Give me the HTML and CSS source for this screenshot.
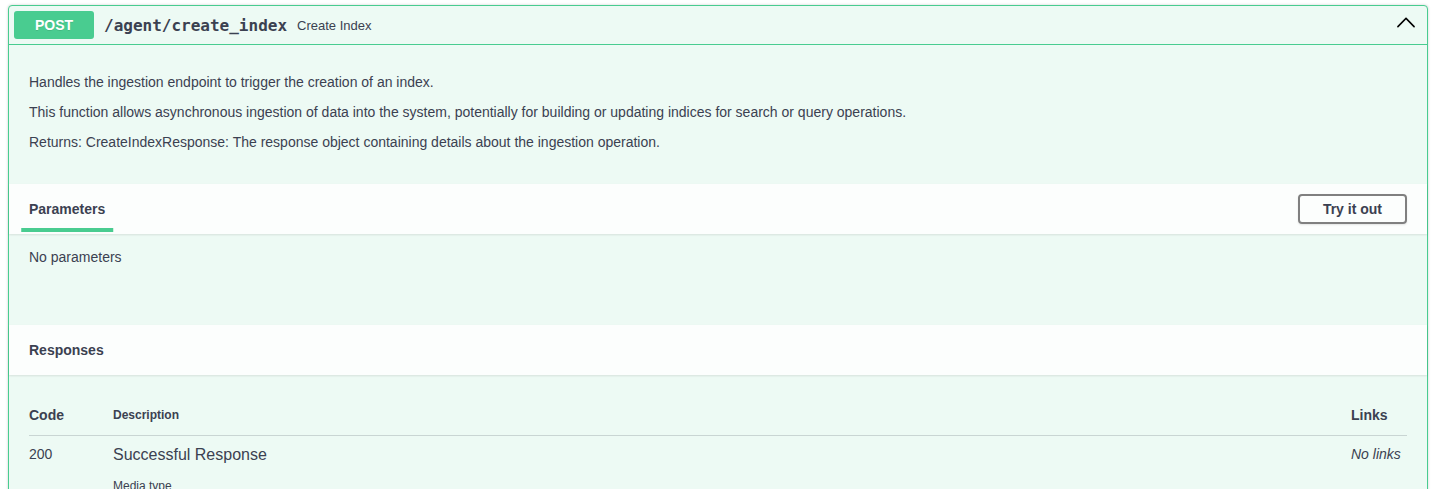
FILE: index.html
```html
<!DOCTYPE html>
<html>
<head>
<meta charset="utf-8">
<link rel="stylesheet" href="styles.css">
</head>
<body>
<div class="opblock">
  <div class="summary">
    <span class="method">POST</span>
    <span class="path">/agent/create_index</span>
    <span class="summary-desc">Create Index</span>
    <svg class="arrow" width="18" height="11" viewBox="2.3 7.5 15.4 8.8" aria-hidden="true"><path d="M17.418 14.908c.271.268.271.701 0 .969s-.708.268-.979 0L10 9.375l-6.438 6.502c-.27.268-.708.268-.979 0s-.271-.701 0-.969l6.951-7.002c.271-.268.708-.268.979 0l6.905 7.002z" fill="#000"/></svg>
  </div>
  <div class="body">
    <div class="description">
      <p>Handles the ingestion endpoint to trigger the creation of an index.</p>
      <p>This function allows asynchronous ingestion of data into the system, potentially for building or updating indices for search or query operations.</p>
      <p>Returns: CreateIndexResponse: The response object containing details about the ingestion operation.</p>
    </div>
    <div class="section-header">
      <div class="tab"><span class="tab-title">Parameters</span></div>
      <button class="btn">Try it out</button>
    </div>
    <div class="params">
      <p>No parameters</p>
    </div>
    <div class="section-header">
      <h4 class="section-title">Responses</h4>
    </div>
    <div class="responses">
      <div class="resp-table">
        <div class="th th-code">Code</div>
        <div class="th th-desc">Description</div>
        <div class="th th-links">Links</div>
        <div class="td td-code">200</div>
        <div class="td td-desc">
          <div class="resp-text">Successful Response</div>
          <div class="media-label">Media type</div>
          <div class="media-select">application/json</div>
        </div>
        <div class="td td-links">No links</div>
      </div>
    </div>
  </div>
</div>
</body>
</html>
```
FILE: styles.css
```css
* { box-sizing: border-box; }
html, body { margin: 0; padding: 0; background: #fff; }
body {
  font-family: "Liberation Sans", Arial, sans-serif;
  color: #3b4151;
}
.opblock {
  margin: 5px 16px 0 8px;
  border: 1px solid #49cc90;
  border-radius: 4px;
  background: #edfaf4;
  box-shadow: 0 0 3px rgba(0,0,0,.19);
}
.summary {
  display: flex;
  align-items: center;
  padding: 5px;
  border-bottom: 1px solid #49cc90;
}
.method {
  display: inline-block;
  min-width: 80px;
  padding: 6px 0;
  border-radius: 3px;
  background: #49cc90;
  color: #fff;
  font-size: 14px;
  font-weight: 700;
  line-height: 16px;
  text-align: center;
  text-shadow: 0 1px 0 rgba(0,0,0,.1);
}
.path {
  padding: 0 10px;
  font-family: "DejaVu Sans Mono", monospace;
  font-size: 16px;
  font-weight: 700;
  color: #3b4151;
}
.summary-desc {
  flex: 1;
  font-size: 13px;
  color: #3b4151;
}
.arrow {
  margin: 0 7px 6px 0;
  display: block;
}
.description {
  padding: 15px 20px 20px;
}
.description p {
  margin: 14px 0;
  font-size: 14px;
  line-height: 16px;
}
.section-header {
  display: flex;
  align-items: center;
  min-height: 50px;
  padding: 8px 20px;
  background: rgba(255,255,255,.8);
  box-shadow: 0 1px 2px rgba(0,0,0,.1);
}
.tab { flex: 1; }
.tab-title {
  position: relative;
  font-size: 14px;
  font-weight: 700;
  line-height: 16px;
}
.tab-title::after {
  content: "";
  position: absolute;
  left: 50%;
  bottom: -15px;
  width: 120%;
  height: 4px;
  transform: translateX(-50%);
  background: #49cc90;
}
.btn {
  padding: 5px 23px;
  border: 2px solid #808080;
  border-radius: 4px;
  background: transparent;
  box-shadow: 0 1px 2px rgba(0,0,0,.1);
  font-family: inherit;
  font-size: 14px;
  font-weight: 700;
  color: #3b4151;
  line-height: 16px;
}
.params {
  padding: 15px 20px;
  min-height: 91px;
}
.params p {
  margin: 0;
  font-size: 14px;
  line-height: 16px;
}
.section-title {
  margin: 0;
  font-size: 14px;
  font-weight: 700;
  line-height: 16px;
}
.responses {
  padding: 20px;
}
.resp-table {
  display: grid;
  grid-template-columns: 84px 1fr 56px;
}
.th {
  padding: 12px 0;
  border-bottom: 1px solid rgba(59,65,81,.2);
  font-weight: 700;
  font-size: 14px;
  line-height: 16px;
}
.th-desc { font-size: 12px; }
.td {
  padding-top: 10px;
  font-size: 14px;
  line-height: 16px;
}
.td-code { line-height: 17px; }
.resp-text {
  font-size: 16px;
  line-height: 18px;
}
.media-label {
  margin-top: 15px;
  font-size: 12px;
  line-height: 14px;
}
.media-select {
  margin-top: 6px;
  display: inline-block;
  padding: 5px 40px 5px 10px;
  border: 2px solid #41444e;
  border-radius: 4px;
  font-size: 14px;
  font-weight: 700;
  background: #f7f7f7;
}
.td-links {
  font-style: italic;
}
```
